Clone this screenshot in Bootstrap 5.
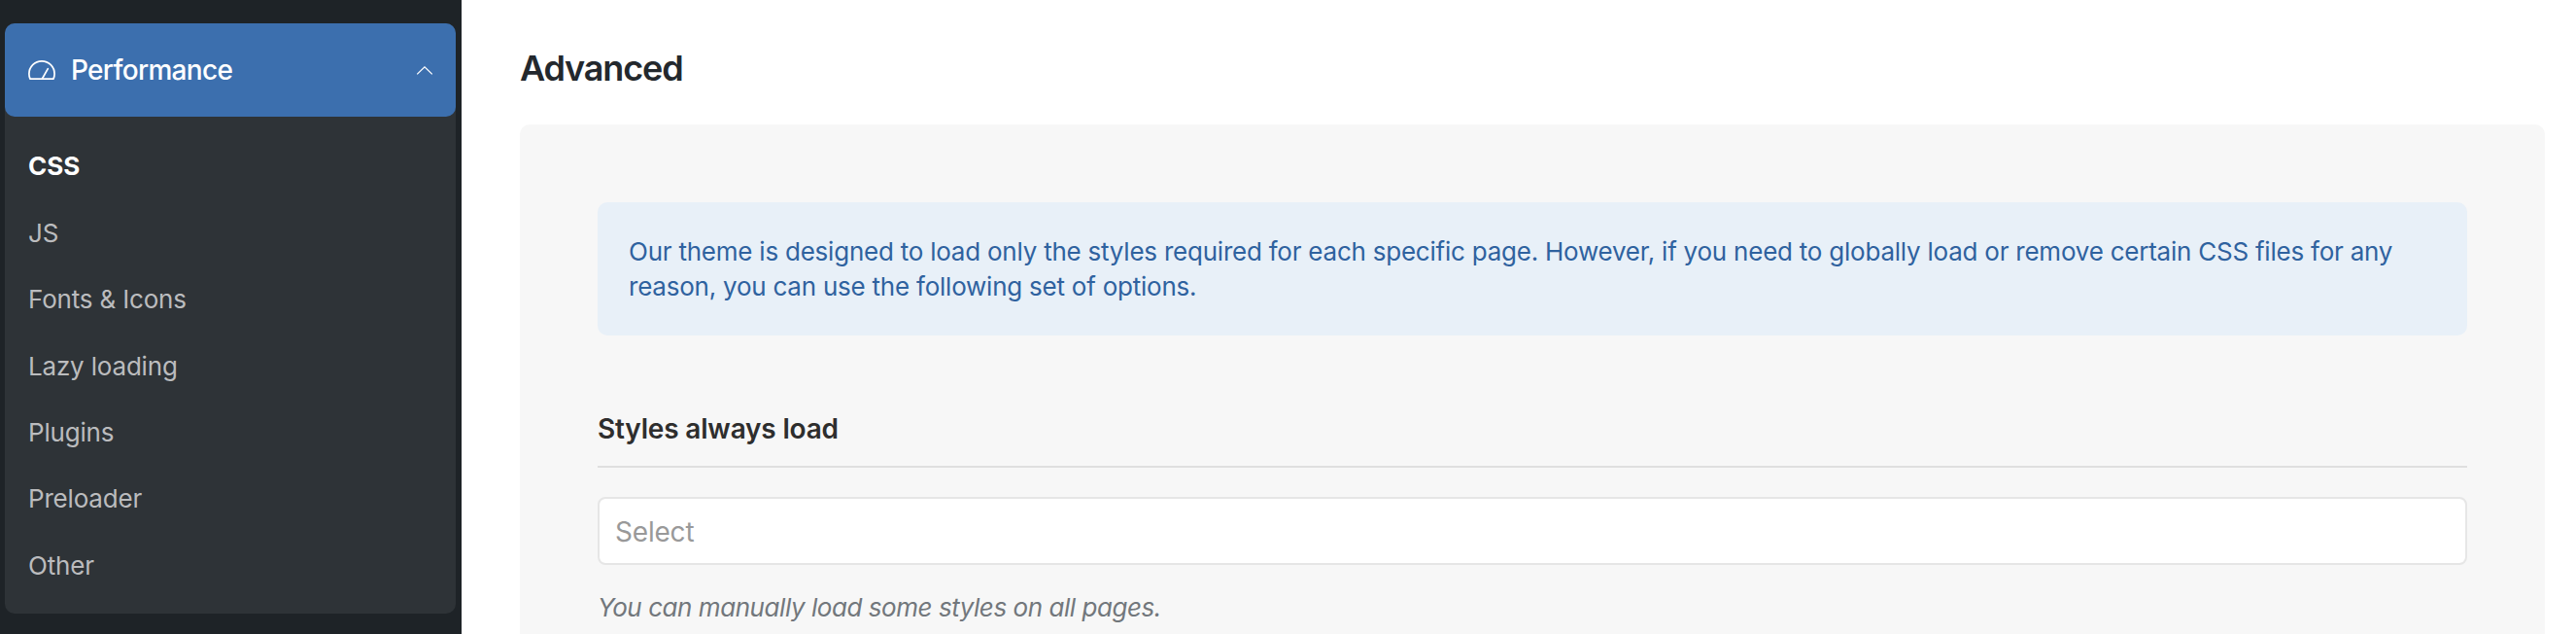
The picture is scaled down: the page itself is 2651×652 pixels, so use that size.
<!DOCTYPE html>
<html lang="en">
<head>
<meta charset="utf-8">
<meta name="viewport" content="width=device-width, initial-scale=1">
<title>Performance – Advanced</title>
<link href="https://cdn.jsdelivr.net/npm/bootstrap@5.3.0/dist/css/bootstrap.min.css" rel="stylesheet">
<style>
  body { font-family: Inter, "Liberation Sans", sans-serif; font-size: 26px; line-height: 1.4; height: 652px; }
  .sidebar { width: 475px; background: #1e2327; padding: 24px 6px 0 5px; }
  .side-group { background: #2e3337; border-radius: 10px; }
  .side-toggle { height: 96px; background: #3c6fae; border-radius: 10px; padding: 0 24px; font-size: 28px; font-weight: 500; letter-spacing: -.68px; }
  .side-toggle:hover { color: #fff; }
  .side-toggle span { padding-top: 2px; }
  .side-menu { padding: 17.4px 0 14.800px; }
  .side-menu .nav-link { color: #bbbcbe; padding: 16px 24px; letter-spacing: -.18px; }
  .side-menu .nav-link.active { color: #fff; font-weight: 700; letter-spacing: 0; }
  .main-area { padding: 0 32px 0 60px; }
  .page-title { font-size: 36px; line-height: 50px; font-weight: 600; letter-spacing: -1.15px; color: #23282d; padding: 45px 0 33px; }
  .panel { background: #f7f7f7; border-radius: 10px 10px 0 0; padding: 80px 80px 0; }
  .info-box { background: #e8f0f8; color: #2f629f; border-radius: 10px; padding: 33px 32px 31px; letter-spacing: -.23px; margin-bottom: 76px; }
  .field-title { font-size: 28px; line-height: 40px; font-weight: 600; letter-spacing: -.18px; color: #2e2e2e; padding-bottom: 18px; border-bottom: 2px solid #dfdfdf; margin-bottom: 30px; }
  .field-select { height: 70px; border: 2px solid #e6e6e6; border-radius: 8px; padding: 2px 16px 0; font-size: 28px; letter-spacing: -.2px; }
  .field-select::placeholder { color: #999; }
  .field-note { color: #72777c; letter-spacing: -.45px; margin-top: 26px; }
</style>
</head>
<body class="d-flex overflow-hidden bg-white">
  <aside class="sidebar flex-shrink-0">
    <div class="side-group">
      <a class="side-toggle d-flex align-items-center text-white text-decoration-none" href="#performance" role="button">
        <svg width="28" height="20" viewBox="0 0 28 20" fill="none" stroke="currentColor" stroke-width="1.7" stroke-linejoin="round" stroke-linecap="round" aria-hidden="true">
          <path d="M2 19.200C1.300 17.600.9 15.800.9 14 .9 6.700 6.800.9 14 .9S27.100 6.700 27.100 14c0 1.800-.4 3.600-1.100 5.200z"/>
          <path d="M14.700 18.500 20.300 8.700"/>
        </svg>
        <span class="ms-3">Performance</span>
        <svg class="ms-auto" width="16" height="9" viewBox="0 0 16 9" fill="none" stroke="currentColor" stroke-width="1.300" aria-hidden="true"><path d="M.2 8.400 8 .9l7.800 7.500"/></svg>
      </a>
      <nav id="performance" class="side-menu nav flex-column">
        <a class="nav-link active" href="#">CSS</a>
        <a class="nav-link" href="#">JS</a>
        <a class="nav-link" href="#">Fonts &amp; Icons</a>
        <a class="nav-link" href="#">Lazy loading</a>
        <a class="nav-link" href="#">Plugins</a>
        <a class="nav-link" href="#">Preloader</a>
        <a class="nav-link" href="#">Other</a>
      </nav>
    </div>
  </aside>
  <main class="main-area flex-grow-1 d-flex flex-column">
    <h1 class="page-title m-0">Advanced</h1>
    <section class="panel flex-grow-1">
      <div class="info-box">Our theme is designed to load only the styles required for each specific page. However, if you need to globally load or remove certain CSS files for any reason, you can use the following set of options.</div>
      <h2 class="field-title">Styles always load</h2>
      <input class="field-select form-control" type="text" placeholder="Select" aria-label="Styles always load">
      <p class="field-note fst-italic mb-0">You can manually load some styles on all pages.</p>
    </section>
  </main>
  <script src="https://cdn.jsdelivr.net/npm/bootstrap@5.3.0/dist/js/bootstrap.bundle.min.js"></script>
</body>
</html>
